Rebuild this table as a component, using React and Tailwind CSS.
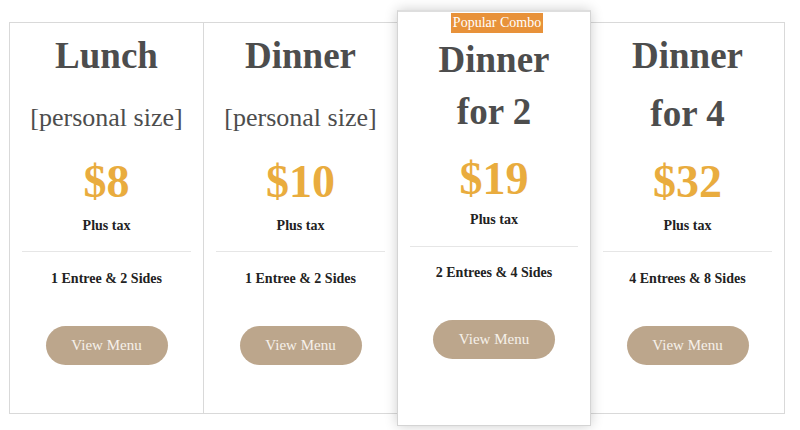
import React from 'react';

const plans = [
  { title: 'Lunch', sub: '[personal size]', price: '$8', items: '1 Entree & 2 Sides' },
  { title: 'Dinner', sub: '[personal size]', price: '$10', items: '1 Entree & 2 Sides' },
  { title: 'Dinner', sub: 'for 2', price: '$19', items: '2 Entrees & 4 Sides', featured: true },
  { title: 'Dinner', sub: 'for 4', price: '$32', items: '4 Entrees & 8 Sides' },
];

const ViewMenu = ({ className = '' }) => (
  <button className={`mx-auto flex h-[39px] w-[122px] items-center justify-center rounded-full bg-[#bca68c] text-[15px] text-[#f6f1ea] ${className}`}>
    View Menu
  </button>
);

const PlanCard = ({ plan }) => {
  const big = plan.sub.startsWith('for');

  if (plan.featured) {
    return (
      <div className="relative z-10 -mt-[12px] -ml-px flex h-[416px] w-[194px] shrink-0 flex-col border border-[#d4d4d4] border-t-2 border-t-[#dedede] bg-white pt-[1px] text-center shadow-[0_0_12px_rgba(0,0,0,0.2)]">
        <div className="flex justify-center">
          <span className="flex h-[20px] items-center bg-[#e8923a] px-[2px] text-[14px] leading-none text-white translate-x-[3px]">Popular Combo</span>
        </div>
        <p className="mt-[1px] text-[37px] font-bold leading-[52px] text-[#4d4d4d]">{plan.title}</p>
        <p className="text-[37px] font-bold leading-[52px] text-[#4d4d4d]">{plan.sub}</p>
        <p className="mt-[18px] text-[46px] font-bold leading-[46px] text-[#e9ac3e]">{plan.price}</p>
        <p className="mt-[8px] text-[14px] font-bold leading-[20px] text-[#222]">Plus tax</p>
        <div className="mx-[12px] mt-[16px] h-px bg-[#e6e6e6]" />
        <p className="mt-[16px] text-[14px] font-bold leading-[20px] text-[#222]">{plan.items}</p>
        <ViewMenu className="mt-[37px]" />
      </div>
    );
  }

  return (
    <div className="-ml-px flex h-[392px] w-[195px] shrink-0 flex-col border border-[#d9d9d9] bg-white pt-[4px] text-center first:ml-0">
      <p className="text-[37px] font-bold leading-[58px] text-[#4d4d4d]">{plan.title}</p>
      {big ? (
        <p className="text-[37px] font-bold leading-[58px] text-[#4d4d4d]">{plan.sub}</p>
      ) : (
        <p className="h-[58px] pt-[8px] text-[26px] leading-[50px] text-[#4d4d4d]">{plan.sub}</p>
      )}
      <p className="mt-[16px] text-[46px] font-bold leading-[46px] text-[#e9ac3e]">{plan.price}</p>
      <p className="mt-[11px] text-[14px] font-bold leading-[20px] text-[#222]">Plus tax</p>
      <div className="mx-[12px] mt-[15px] h-px bg-[#e6e6e6]" />
      <p className="mt-[17px] text-[14px] font-bold leading-[20px] text-[#222]">{plan.items}</p>
      <ViewMenu className="mt-[37px]" />
    </div>
  );
};

export default function App() {
  return (
    <div className="h-[430px] w-[800px] overflow-hidden bg-white font-['Liberation_Serif',serif]">
      <div className="flex items-start pl-[9px] pt-[22px]">
        {plans.map((plan, i) => (
          <PlanCard key={i} plan={plan} />
        ))}
      </div>
    </div>
  );
}
